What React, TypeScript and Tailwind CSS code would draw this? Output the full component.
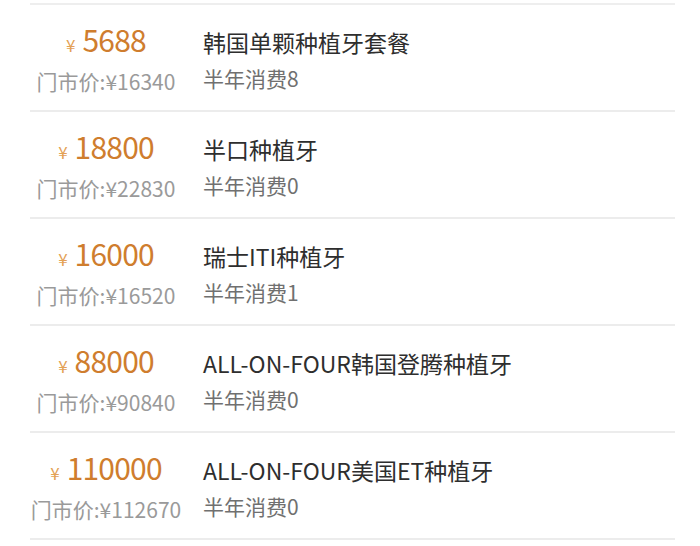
const items = [
  { price: "5688", old: "16340", name: "韩国单颗种植牙套餐", sold: 8 },
  { price: "18800", old: "22830", name: "半口种植牙", sold: 0 },
  { price: "16000", old: "16520", name: "瑞士ITI种植牙", sold: 1 },
  { price: "88000", old: "90840", name: "ALL-ON-FOUR韩国登腾种植牙", sold: 0 },
  { price: "110000", old: "112670", name: "ALL-ON-FOUR美国ET种植牙", sold: 0 },
];

export default function App() {
  return (
    <div
      className="h-[546px] w-[700px] bg-white pt-[3px] pl-[30px] pr-[25px]"
      style={{ fontFamily: '"Noto Sans CJK SC", "Noto Sans", sans-serif' }}
    >
      <div className="border-t-2 border-[#eeeeee]">
        {items.map((it) => (
          <div
            key={it.name}
            className="flex h-[107px] items-center border-b-2 border-[#ececec]"
          >
            <div className="flex w-[152px] shrink-0 flex-col items-center">
              <div className="flex items-baseline leading-[36px] text-[#cf7d2e]">
                <span className="mr-[7px] text-[17px] text-[#e3a155]">¥</span>
                <span className="text-[30px] tracking-[-0.8px]">{it.price}</span>
              </div>
              <div className="mt-[4px] text-[21px] leading-[28px] text-[#9a9a9a]">
                门市价:¥{it.old}
              </div>
            </div>
            <div className="ml-[21px] flex flex-col">
              <div className="text-[23px] leading-[36px] text-[#2e2e2e]">{it.name}</div>
              <div className="mt-[4px] text-[21px] leading-[28px] text-[#707070]">
                半年消费{it.sold}
              </div>
            </div>
          </div>
        ))}
      </div>
    </div>
  );
}
